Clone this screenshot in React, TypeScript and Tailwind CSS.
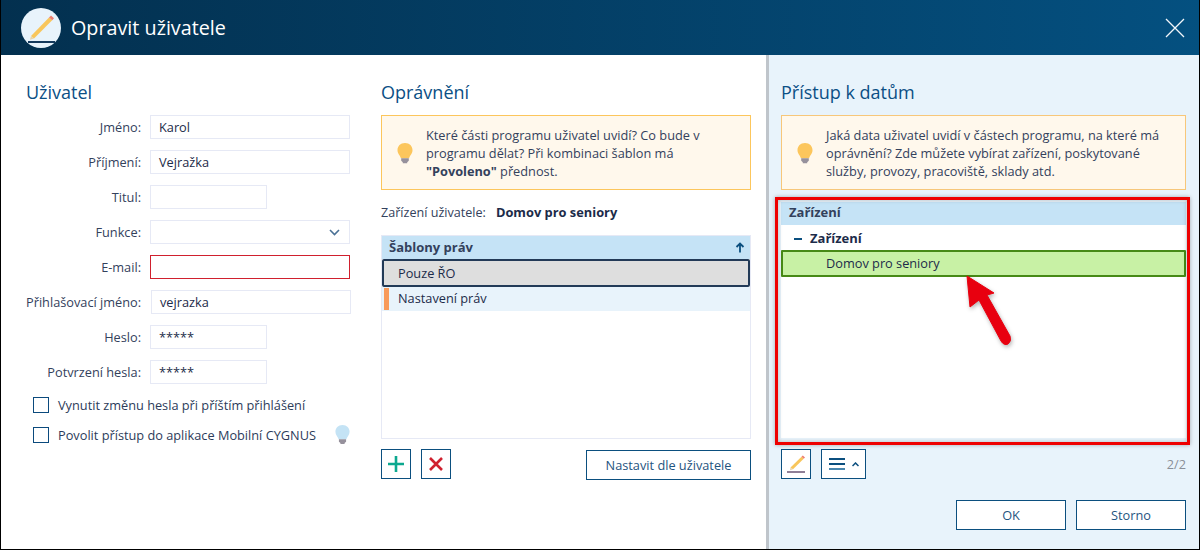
const font = { fontFamily: '"Open Sans", sans-serif' };

function Bulb({ fill = "#fcc65c", size = 18 }: { fill?: string; size?: number }) {
  return (
    <svg width={size} height={(size * 22) / 18} viewBox="0 0 18 22" className="shrink-0">
      <path d="M9 1C4.400 1 1.500 4.200 1.500 8.200c0 3.500 2.600 5 3.400 8h8.200c.8-3 3.400-4.500 3.400-8C16.500 4.200 13.600 1 9 1z" fill={fill} />
      <path d="M5.200 16.200h7.600v2.600l-1.600 1.400v1H6.800v-1l-1.600-1.400z" fill="#96919c" />
    </svg>
  );
}

function Field({ label, value, w = "w-[200px]", red = false, chevron = false, shift = false }: { label: string; value?: string; w?: string; red?: boolean; chevron?: boolean; shift?: boolean }) {
  return (
    <div className="flex h-[24px] items-center">
      <div className="w-[115px] pt-px text-right text-[12.75px] text-[#33415c] whitespace-nowrap">{label}</div>
      <div className={`${shift ? "ml-[10px]" : "ml-[9px]"} ${w} h-[24px] border ${red ? "border-[#d0202e]" : "border-[#e6e9f5]"} bg-white flex items-center justify-between pl-[8px] pr-[9px] text-[12.75px] text-[#1c2b49]`}>
        <span className="pt-px">{value}</span>
        {chevron ? (
          <svg width="11" height="7" viewBox="0 0 11 7"><path d="M1 1l4.500 4.500L10 1" fill="none" stroke="#4a7196" strokeWidth="1.600" /></svg>
        ) : null}
      </div>
    </div>
  );
}

function Check({ label, bulb = false }: { label: string; bulb?: boolean }) {
  return (
    <div className="flex h-[16px] items-center pl-[7px]">
      <div className="w-[16px] h-[16px] border border-[#0b4a7d] bg-white shrink-0" />
      <span className="ml-[9px] pt-px text-[12.75px] text-[#2c3b5a] whitespace-nowrap">{label}</span>
      {bulb ? <span className="ml-[18px] -mt-[2px]"><Bulb fill="#c4e3f5" size={17} /></span> : null}
    </div>
  );
}

function Hint({ children, border }: { children: React.ReactNode; border: string }) {
  return (
    <div className={`h-[75px] border ${border} bg-[#fff8ec] flex items-center pl-[14px] text-[12.75px] leading-[18px] text-[#33415c]`}>
      <Bulb />
      <div className="ml-[12px] whitespace-nowrap">{children}</div>
    </div>
  );
}

function IconBtn({ children, w = "w-[30px]" }: { children: React.ReactNode; w?: string }) {
  return <div className={`${w} h-[30px] border border-[#0b4f7f] bg-white flex items-center justify-center`}>{children}</div>;
}

function TextBtn({ label, w }: { label: string; w: string }) {
  return (
    <div className={`${w} h-[30px] pt-px border border-[#0b4f7f] bg-white flex items-center justify-center text-[12.75px] text-[#1f5480]`}>
      {label}
    </div>
  );
}

export default function App() {
  return (
    <div className="w-[1200px] h-[550px] overflow-hidden relative bg-white border-l border-r border-b border-black" style={font}>
      <div className="h-[55px] -ml-px -mr-px bg-gradient-to-r from-[#03304f] to-[#045080] flex items-center pl-[21px] pr-[15px]">
        <div className="w-[40px] h-[40px] rounded-full bg-[#e8f3fb] flex items-center justify-center">
          <svg width="28" height="30" viewBox="0 0 28 30">
            <path d="M4 23L22 4.500l3.200 2.800L7 25.500z" fill="#f8c65c" />
            <path d="M4 23l3 2.500-4 1.300z" fill="#e8d3a8" />
            <path d="M22 4.500L24 2.500l3 2.800-1.800 2z" fill="#ee7f70" />
            <rect x="1" y="28" width="27" height="2" fill="#14395c" />
          </svg>
        </div>
        <div className="ml-[10px] text-[19.75px] text-white flex-1">Opravit uživatele</div>
        <svg width="20" height="20" viewBox="0 0 20 20"><path d="M1 1l18 18M19 1L1 19" stroke="#f2f6fa" strokeWidth="1.300" fill="none" /></svg>
      </div>

      <div className="flex h-[494px]">
        <div className="w-[765px] flex pl-[25px] pt-[25px]">
          <div className="w-[326px] shrink-0">
            <h2 className="text-[18px] leading-[24px] text-[#0b4f85]">Uživatel</h2>
            <div className="mt-[11px] flex flex-col gap-[11px]">
              <Field label="Jméno:" value="Karol" />
              <Field label="Příjmení:" value="Vejražka" />
              <Field label="Titul:" w="w-[117px]" />
              <Field label="Funkce:" chevron />
              <Field label="E-mail:" red />
              <Field label="Přihlašovací jméno:" value="vejrazka" shift />
              <Field label="Heslo:" value="*****" w="w-[117px]" />
              <Field label="Potvrzení hesla:" value="*****" w="w-[117px]" />
            </div>
            <div className="mt-[13px] flex flex-col gap-[14px]">
              <Check label="Vynutit změnu hesla při příštím přihlášení" />
              <Check label="Povolit přístup do aplikace Mobilní CYGNUS" bulb />
            </div>
          </div>

          <div className="ml-[29px] w-[370px] shrink-0">
            <h2 className="text-[18px] leading-[24px] text-[#0b4f85]">Oprávnění</h2>
            <div className="mt-[11px]">
              <Hint border="border-[#fcc65c]">
                Které části programu uživatel uvidí? Co bude v<br />programu dělat? Při kombinaci šablon má<br />
                <b className="font-bold">"Povoleno"</b> přednost.
              </Hint>
            </div>
            <div className="mt-[14px] h-[18px] flex items-center text-[12.6px] text-[#33415c]">
              Zařízení uživatele:
              <b className="ml-[10px] font-bold text-[12.85px] text-[#1c2b49]">Domov pro seniory</b>
            </div>
            <div className="mt-[13px] h-[204px] border border-[#e6e9f5] bg-white">
              <div className="h-[23px] bg-[#c5e3f6] flex items-center justify-between pl-[7px] pr-[5px] text-[13px] font-bold text-[#33415c]">
                Šablony práv
                <svg width="10" height="11" viewBox="0 0 10 11"><path d="M5 10.500V1.500M1.500 5L5 1.500 8.500 5" stroke="#0b4f7f" strokeWidth="1.800" fill="none" /></svg>
              </div>
              <div className="h-[28px] pt-px border-2 border-[#223a57] rounded-[2px] bg-[#dedede] flex items-center pl-[14px] text-[12.75px] text-[#1c2b49]">Pouze ŘO</div>
              <div className="h-[24px] bg-[#e8f3fb] flex items-center text-[12.75px] text-[#1c2b49] pl-[2px]">
                <div className="w-[5px] h-[22px] bg-[#f89a5b]" />
                <span className="ml-[9px]">Nastavení práv</span>
              </div>
            </div>
            <div className="mt-[10px] flex items-start">
              <IconBtn>
                <svg width="18" height="18" viewBox="0 0 18 18"><path d="M9 1v16M1 9h16" stroke="#0ca88f" strokeWidth="2.600" fill="none" /></svg>
              </IconBtn>
              <div className="ml-[10px]">
                <IconBtn>
                  <svg width="16" height="16" viewBox="0 0 16 16"><path d="M2 2l12 12M14 2L2 14" stroke="#d0202e" strokeWidth="2.600" fill="none" /></svg>
                </IconBtn>
              </div>
              <div className="ml-auto mt-px">
                <TextBtn label="Nastavit dle uživatele" w="w-[165px]" />
              </div>
            </div>
          </div>
        </div>

        <div className="w-[3px] bg-[#bfc5cb]" />

        <div className="flex-1 bg-[#e8f3fb] pl-[12px] pr-[12px] pt-[25px] flex flex-col">
          <h2 className="text-[18px] leading-[24px] text-[#0b4f85]">Přístup k datům</h2>
          <div className="mt-[11px] mr-px">
            <Hint border="border-[#f7c77a]">
              Jaká data uživatel uvidí v částech programu, na které má<br />oprávnění? Zde můžete vybírat zařízení, poskytované<br />služby, provozy, pracoviště, sklady atd.
            </Hint>
          </div>
          <div className="mt-[12px] h-[236px] mr-px bg-white">
            <div className="h-[23px] pb-px bg-[#c5e3f6] flex items-center pl-[8px] text-[13px] font-bold text-[#33415c]">Zařízení</div>
            <div className="h-[25px] pt-[3px] flex items-center pl-[13px] text-[13px] font-bold text-[#1c2b49]">
              <div className="w-[8px] h-[2px] bg-[#0b4f7f]" />
              <span className="ml-[8px]">Zařízení</span>
            </div>
            <div className="h-[27px] border-2 border-[#478a16] rounded-[1px] bg-[#c8f1a5] flex items-center pl-[43px] text-[12.75px] text-[#1c2b49]">Domov pro seniory</div>
          </div>
          <div className="mt-[11px] mr-px flex items-start">
            <IconBtn>
              <svg width="20" height="18" viewBox="0 0 20 18">
                <path d="M4.500 12.500L15.500 1.800l2.200 2L7 14.200z" fill="#f8c65c" />
                <path d="M4.500 12.500L7 14.200l-3 1z" fill="#e8d3a8" />
                <path d="M15.500 1.800L16.800.5l2.200 2-1.300 1.300z" fill="#ee7f70" />
                <rect x="1" y="16" width="18" height="2" fill="#8f7f97" />
              </svg>
            </IconBtn>
            <div className="ml-[10px]">
              <IconBtn w="w-[45px]">
                <div className="flex items-center gap-[7px]">
                  <div className="flex flex-col gap-[3px]">
                    <div className="w-[16px] h-[2px] bg-[#0b4f7f]" />
                    <div className="w-[16px] h-[2px] bg-[#0b4f7f]" />
                    <div className="w-[16px] h-[2px] bg-[#4a86ad]" />
                  </div>
                  <svg width="7" height="5" viewBox="0 0 7 5"><path d="M.5 4L3.500 1l3 3" stroke="#0b4f7f" strokeWidth="1.500" fill="none" /></svg>
                </div>
              </IconBtn>
            </div>
            <div className="ml-auto mt-[6px] text-[12.75px] text-[#8a8f98]">2/2</div>
          </div>
          <div className="mt-[21px] mr-px flex justify-end gap-[10px]">
            <TextBtn label="OK" w="w-[110px]" />
            <TextBtn label="Storno" w="w-[110px]" />
          </div>
        </div>
      </div>

      <div className="absolute left-[774px] top-[197px] w-[415px] h-[248px] border-[3px] border-[#ee0000] shadow-[0_0_4px_rgba(0,0,0,0.3),inset_0_0_4px_rgba(0,0,0,0.25)]" />
      <svg className="absolute left-[960px] top-[270px]" width="60" height="85" viewBox="0 0 60 85">
        <path d="M6 6 L9 37 L18 30 L40 71 Q43 76 47 74 Q51 71 49 66 L26 25 L33 23 Z" fill="#e8000f" stroke="#e8000f" strokeWidth="1" style={{ filter: "drop-shadow(1px 2px 2px rgba(0,0,0,.3))" }} />
      </svg>
    </div>
  );
}
